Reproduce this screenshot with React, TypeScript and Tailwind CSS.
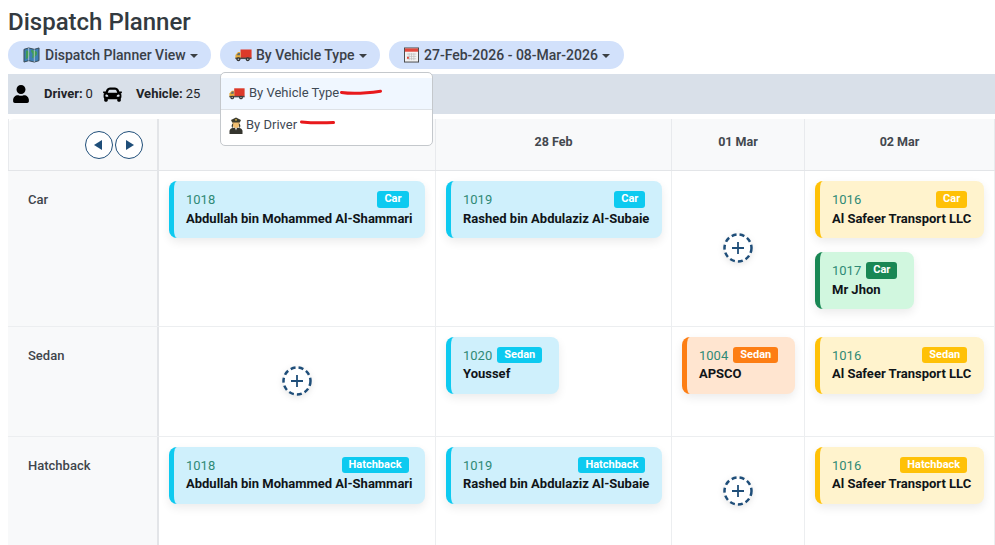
import { FaUser, FaCar } from "react-icons/fa";

type Tone = "blue" | "yellow" | "green" | "orange";

const tones: Record<Tone, { card: string; badge: string }> = {
  blue: { card: "bg-[#cff0fc] border-l-[#0dcaf0]", badge: "bg-[#0dcaf0]" },
  yellow: { card: "bg-[#fff3cd] border-l-[#ffc107]", badge: "bg-[#ffc107]" },
  green: { card: "bg-[#d1f7df] border-l-[#198754]", badge: "bg-[#198754]" },
  orange: { card: "bg-[#ffe5d0] border-l-[#fd7e14]", badge: "bg-[#fd7e14]" },
};

function TruckIcon({ className }: { className?: string }) {
  return (
    <svg viewBox="0 0 20 16" className={className}>
      <rect x="6.500" y="1.500" width="13" height="10" fill="#dc3a2a" />
      <path d="M6.500 4.500H3.500L.5 8v4h6z" fill="#e9ad3a" />
      <path d="M3.800 5.500H5.800v2.800H1.900z" fill="#5b6b75" />
      <rect x=".5" y="11" width="19" height="1.800" fill="#4a4a4a" />
      <circle cx="4" cy="13" r="2.300" fill="#333" />
      <circle cx="15" cy="13" r="2.300" fill="#333" />
      <circle cx="4" cy="13" r=".9" fill="#bbb" />
      <circle cx="15" cy="13" r=".9" fill="#bbb" />
    </svg>
  );
}

function MapIcon() {
  return (
    <svg viewBox="0 0 18 17" className="w-[17px] h-[16px] shrink-0">
      <path d="M1 2.500 6 1l6 1.500L17 1v13.500L12 16l-6-1.500L1 16z" fill="#3f7fb5" stroke="#37474f" strokeWidth="1" />
      <path d="M3 4c2-1 3 0 4 2s-1 4-2 6l-2 1zM9 3l3 1c2 0 3 1 3 3s-2 2-3 4l-2 1c-1-2 1-3 0-5s-2-2-1-4z" fill="#3f9b57" />
      <path d="M6 1v13.500M12 2.500V16" stroke="#c9d3d8" strokeWidth=".8" />
    </svg>
  );
}

function CalendarIcon() {
  return (
    <svg viewBox="0 0 16 16" className="w-[15px] h-[16px] shrink-0">
      <rect x=".5" y=".5" width="15" height="15" fill="#f3f3f3" stroke="#444" />
      <rect x="1" y="1" width="14" height="3.500" fill="#e2483d" />
      <path d="M3 7h10M3 9.500h10M3 12h10M5.500 6v7.500M8 6v7.500M10.500 6v7.500" stroke="#bbb" strokeWidth=".7" />
      <rect x="3.200" y="10" width="2" height="2" fill="#e2483d" />
    </svg>
  );
}

function DriverIcon() {
  return (
    <svg viewBox="0 0 14 17" className="w-[14px] h-[17px] shrink-0">
      <path d="M.5 17v-3C.5 11.500 4 10.500 7 10.500s6.500 1 6.500 3.500v3z" fill="#35352e" />
      <path d="M5.800 10.500h2.400L7 13.500z" fill="#e4e4e4" />
      <path d="M3.500 7c0 2.500 1.500 4 3.500 4s3.500-1.500 3.500-4V5h-7z" fill="#f2bf72" />
      <path d="M3 7.500c-.6 1.500-.4 3 .7 3.400L4.300 6zM11 7.500c.6 1.500.4 3-.7 3.400L9.700 6z" fill="#3b3b2f" />
      <path d="M2 3 7 .5 12 3l-1.200 2.500H3.200z" fill="#3b3b2f" />
      <rect x="6.100" y="2.200" width="1.800" height="1.400" fill="#d9b44a" />
    </svg>
  );
}

function Caret() {
  return <span className="ml-[4px] inline-block w-0 h-0 border-x-[4px] border-x-transparent border-t-[4px] border-t-[#3a3f44] mt-[2px]" />;
}

function PillButton({ icon, label, className }: { icon: React.ReactNode; label: string; className: string }) {
  return (
    <div className={`h-[28px] rounded-full bg-[#d2e1fb] flex items-center text-[14px] font-medium text-[#3a4048] ${className}`}>
      {icon}
      <span>{label}</span>
      <Caret />
    </div>
  );
}

function Card({ id, type, name, tone }: { id: string; type: string; name: string; tone: Tone }) {
  const t = tones[tone];
  return (
    <div className={`w-fit h-[57px] rounded-[8px] border-l-[5px] pl-[12px] pr-[12.500px] pt-[10px] shadow-[0_4px_10px_rgba(0,0,0,0.08)] ${t.card}`}>
      <div className="flex items-center justify-between h-[17px]">
        <span className="text-[13px] leading-[17px] text-[#2f8a76]">{id}</span>
        <span className={`ml-[5px] mr-[4px] px-[7px] h-[16.500px] rounded-[3px] text-[11px] leading-[15px] font-bold text-white ${t.badge}`}>{type}</span>
      </div>
      <div className="mt-[0.6px] text-[13px] leading-[19px] font-bold text-[#101418] whitespace-nowrap">{name}</div>
    </div>
  );
}

function AddButton() {
  return (
    <div className="h-full flex items-center justify-center">
      <svg viewBox="0 0 30 30" className="w-[30px] h-[30px] drop-shadow-[0_2px_3px_rgba(0,0,0,0.1)]">
        <circle cx="15" cy="15" r="13.500" fill="#fff" stroke="#1f4e79" strokeWidth="2.500" strokeDasharray="5 3.100" />
        <path d="M15 9v12M9 15h12" stroke="#1f4e79" strokeWidth="1.800" />
      </svg>
    </div>
  );
}

function NavButton({ dir }: { dir: "left" | "right" }) {
  return (
    <div className="w-[28px] h-[28px] rounded-full border border-[#1f4e79] bg-white flex items-center justify-center">
      {dir === "left" ? (
        <span className="w-0 h-0 border-y-[5.500px] border-y-transparent border-r-[8px] border-r-[#1f4e79] mr-[2px]" />
      ) : (
        <span className="w-0 h-0 border-y-[5.500px] border-y-transparent border-l-[8px] border-l-[#1f4e79] ml-[2px]" />
      )}
    </div>
  );
}

const rows: { label: string; height: string; cells: ({ id: string; name: string; tone: Tone }[] | null)[] }[] = [
  {
    label: "Car",
    height: "h-[155.600px]",
    cells: [
      [{ id: "1018", name: "Abdullah bin Mohammed Al-Shammari", tone: "blue" }],
      [{ id: "1019", name: "Rashed bin Abdulaziz Al-Subaie", tone: "blue" }],
      null,
      [
        { id: "1016", name: "Al Safeer Transport LLC", tone: "yellow" },
        { id: "1017", name: "Mr Jhon", tone: "green" },
      ],
    ],
  },
  {
    label: "Sedan",
    height: "h-[110px]",
    cells: [
      null,
      [{ id: "1020", name: "Youssef", tone: "blue" }],
      [{ id: "1004", name: "APSCO", tone: "orange" }],
      [{ id: "1016", name: "Al Safeer Transport LLC", tone: "yellow" }],
    ],
  },
  {
    label: "Hatchback",
    height: "h-[110px]",
    cells: [
      [{ id: "1018", name: "Abdullah bin Mohammed Al-Shammari", tone: "blue" }],
      [{ id: "1019", name: "Rashed bin Abdulaziz Al-Subaie", tone: "blue" }],
      null,
      [{ id: "1016", name: "Al Safeer Transport LLC", tone: "yellow" }],
    ],
  },
];

const gridCols = "grid grid-cols-[151px_277px_236px_133px_190px]";

export default function App() {
  return (
    <div className="h-[545px] w-[995px] overflow-hidden bg-white pl-[8px] font-['Roboto',sans-serif]">
      <h1 className="h-[41px] pt-[8px] text-[24px] leading-[28px] font-medium text-[#333a40]">Dispatch Planner</h1>

      <div className="flex gap-[9px] h-[28px]">
        <PillButton icon={<span className="mr-[5px]"><MapIcon /></span>} label="Dispatch Planner View" className="w-[203px] pl-[15px]" />
        <div className="relative">
          <PillButton icon={<TruckIcon className="w-[17px] h-[14px] mr-[4px] shrink-0" />} label="By Vehicle Type" className="w-[160px] pl-[15px]" />
          <div className="absolute z-10 left-0 top-[31px] w-[213px] h-[74px] rounded-[5px] border border-[#c4c8cc] bg-white pt-[5px] text-[13px] text-[#3f4a55]">
            <div className="relative h-[32px] flex items-center gap-[4px] pl-[8px] bg-[#f0f7ff] border-b border-[#dee2e6]">
              <TruckIcon className="w-[16px] h-[13px] shrink-0" />
              <span className="mb-[2px]">By Vehicle Type</span>
              <svg viewBox="0 0 42 6" className="absolute left-[119px] top-[11px] w-[42px] h-[6px]">
                <path d="M1.500 3.500C12 5 28 4 40.500 2.200" stroke="#e8191c" strokeWidth="3" fill="none" strokeLinecap="round" />
              </svg>
            </div>
            <div className="relative h-[31px] flex items-center gap-[3px] pl-[8px]">
              <DriverIcon />
              <span className="mb-[2px]">By Driver</span>
              <svg viewBox="0 0 35 5" className="absolute left-[79px] top-[10px] w-[35px] h-[5px]">
                <path d="M1.500 2C12 3 24 3 33.500 2.500" stroke="#e8191c" strokeWidth="3" fill="none" strokeLinecap="round" />
              </svg>
            </div>
          </div>
        </div>
        <PillButton icon={<span className="mr-[5px]"><CalendarIcon /></span>} label="27-Feb-2026 - 08-Mar-2026" className="w-[235px] pl-[15px]" />
      </div>

      <div className="mt-[5px] h-[40px] bg-[#d9e0e9] flex items-center text-[13px] text-[#1f2428]">
        <FaUser className="ml-[5px] w-[16px] h-[18px] text-black" />
        <span className="ml-[15px] font-bold">Driver:</span>
        <span className="ml-[3px]">0</span>
        <FaCar className="ml-[10px] w-[19px] h-[19px] text-black" />
        <span className="ml-[14px] font-bold">Vehicle:</span>
        <span className="ml-[3px]">25</span>
      </div>

      <div className="mt-[5px]">
        <div className={`${gridCols} h-[52px] bg-[#f8f9fa] border-b border-[#e3e5e8] text-[12.500px] font-bold text-[#43484e] rounded-tl-[6px]`}>
          <div className="border-l border-[#e8eaed] border-r-2 border-r-[#e3e5e8] flex items-center justify-end gap-[2px] pr-[14px]">
            <NavButton dir="left" />
            <NavButton dir="right" />
          </div>
          <div className="border-r border-[#e8eaed]" />
          {["28 Feb", "01 Mar", "02 Mar"].map((d) => (
            <div key={d} className="border-r border-[#e8eaed] flex items-center justify-center pb-[4px]">{d}</div>
          ))}
        </div>

        {rows.map((row) => (
          <div key={row.label} className={`${gridCols} ${row.height} border-b border-[#eceef0]`}>
            <div className="bg-[#f8f9fa] border-r-2 border-r-[#e3e5e8] pl-[20px] pt-[21px] text-[13px] leading-[15px] font-medium text-[#3f454b]">{row.label}</div>
            {row.cells.map((cell, i) => (
              <div key={i} className={`border-r border-[#eceef0] flex flex-col gap-[14px] ${cell ? "pl-[10px] pt-[10px]" : ""}`}>
                {cell ? cell.map((c) => <Card key={c.id} id={c.id} type={row.label} name={c.name} tone={c.tone} />) : <AddButton />}
              </div>
            ))}
          </div>
        ))}
      </div>
    </div>
  );
}
